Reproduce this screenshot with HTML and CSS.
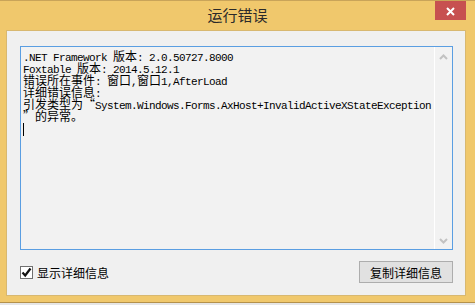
FILE: index.html
```
<!DOCTYPE html>
<html lang="zh-CN">
<head>
  <meta charset="UTF-8" />
  <title>运行错误</title>
  <link rel="stylesheet" href="styles.css">
</head>
<body>
  <div class="window">
    <div class="titlebar">
      <span></span>
      <h1 class="title">运行错误</h1>
      <button class="close" aria-label="关闭">
        <svg width="9" height="9" viewBox="0 0 9 9"><path d="M1 1L8 8M8 1L1 8" stroke="#fff" stroke-width="2" fill="none"/></svg>
      </button>
    </div>

    <div class="client">
      <div class="details">
        <div class="details-text">
          <div class="line">.NET Framework <span class="zh">版本</span>: 2.0.50727.8000</div>
          <div class="line">Foxtable <span class="zh">版本</span>: 2014.5.12.1</div>
          <div class="line"><span class="zh">错误所在事件</span>: <span class="zh">窗口</span>,<span class="zh">窗口</span>1,AfterLoad</div>
          <div class="line"><span class="zh">详细错误信息</span>:</div>
          <div class="line"><span class="zh">引发类型为</span><span class="q q-open">“</span>System.Windows.Forms.AxHost+InvalidActiveXStateException</div>
          <div class="line"><span class="q q-close">”</span><span class="zh">的异常。</span></div>
          <div class="line"><span class="caret"></span></div>
        </div>
        <div class="scrollbar">
          <svg width="9" height="6" viewBox="0 0 9 6"><path d="M1 5L4.5 1.5L8 5" stroke="#c2c2c2" stroke-width="2" fill="none"/></svg>
          <svg width="9" height="6" viewBox="0 0 9 6"><path d="M1 1L4.5 4.5L8 1" stroke="#c2c2c2" stroke-width="2" fill="none"/></svg>
        </div>
      </div>

      <div class="footer">
        <label class="check">
          <span class="box">
            <svg width="11" height="11" viewBox="0 0 11 11"><path d="M1.5 5.5L4.2 8.5L9.5 1.5" stroke="#111" stroke-width="2.2" fill="none"/></svg>
          </span>
          <span>显示详细信息</span>
        </label>
        <button class="copy">复制详细信息</button>
      </div>
    </div>
  </div>
  <div class="taskbar"></div>
</body>
</html>
```

FILE: styles.css
```
* { box-sizing: border-box; margin: 0; padding: 0; }
body {
  width: 475px;
  height: 305px;
  overflow: hidden;
  background: #e6e6e6;
  font-family: "Noto Sans CJK SC", sans-serif;
}
.window {
  width: 475px;
  height: 303px;
  background: #f0c86c;
  border-top: 1px solid #c9a459;
  border-bottom: 1px solid #b4914c;
  padding: 0 9px 6px 6px;
  display: flex;
  flex-direction: column;
}
.titlebar {
  height: 29px;
  display: grid;
  grid-template-columns: 1fr auto 1fr;
  padding-left: 3px;
}
.title {
  font-size: 15px;
  font-weight: normal;
  color: #2a2a2a;
  line-height: 28px;
}
.close {
  justify-self: end;
  width: 31px;
  height: 19px;
  border: none;
  background: #c75050;
  display: flex;
  align-items: center;
  justify-content: center;
  padding-top: 2px;
}
.client {
  flex: 1;
  background: #f0f0f0;
  border: 1px solid #d8b870;
  padding: 15px 0 0 13px;
}
.details {
  width: 433px;
  height: 204px;
  border: 1px solid #5a9ee2;
  background: #f2f2f2;
  display: flex;
}
.details-text {
  flex: 1;
  padding: 3px 0 0 2px;
  font-family: "Liberation Mono", monospace;
  font-size: 11px;
  letter-spacing: -0.6px;
  color: #000;
}
.line {
  height: 12px;
  line-height: 12px;
  white-space: pre;
}
.zh, .q {
  font-family: "Noto Sans CJK SC", sans-serif;
  font-size: 12px;
  letter-spacing: 0;
}
.q {
  display: inline-block;
  width: 12px;
}
.q-open { text-align: right; }
.q-close { text-align: left; }
.caret {
  display: inline-block;
  width: 1px;
  height: 13px;
  background: #000;
  vertical-align: top;
  margin-top: 1px;
}
.scrollbar {
  width: 18px;
  border-left: 1px solid #fff;
  display: flex;
  flex-direction: column;
  justify-content: space-between;
  align-items: center;
  padding: 7px 0 5px 0;
}
.footer {
  width: 433px;
  margin-top: 11px;
  display: flex;
  align-items: center;
  justify-content: space-between;
}
.check {
  display: flex;
  align-items: center;
  gap: 4px;
  font-size: 12px;
  color: #000;
  margin-top: 1px;
}
.box {
  width: 13px;
  height: 13px;
  border: 1px solid #707070;
  background: #fff;
  display: flex;
  align-items: center;
  justify-content: center;
}
.copy {
  width: 94px;
  height: 22px;
  border: 1px solid #adadad;
  background: #e1e1e1;
  font-family: "Noto Sans CJK SC", sans-serif;
  font-size: 12px;
  color: #000;
}
.taskbar {
  height: 2px;
}
```
